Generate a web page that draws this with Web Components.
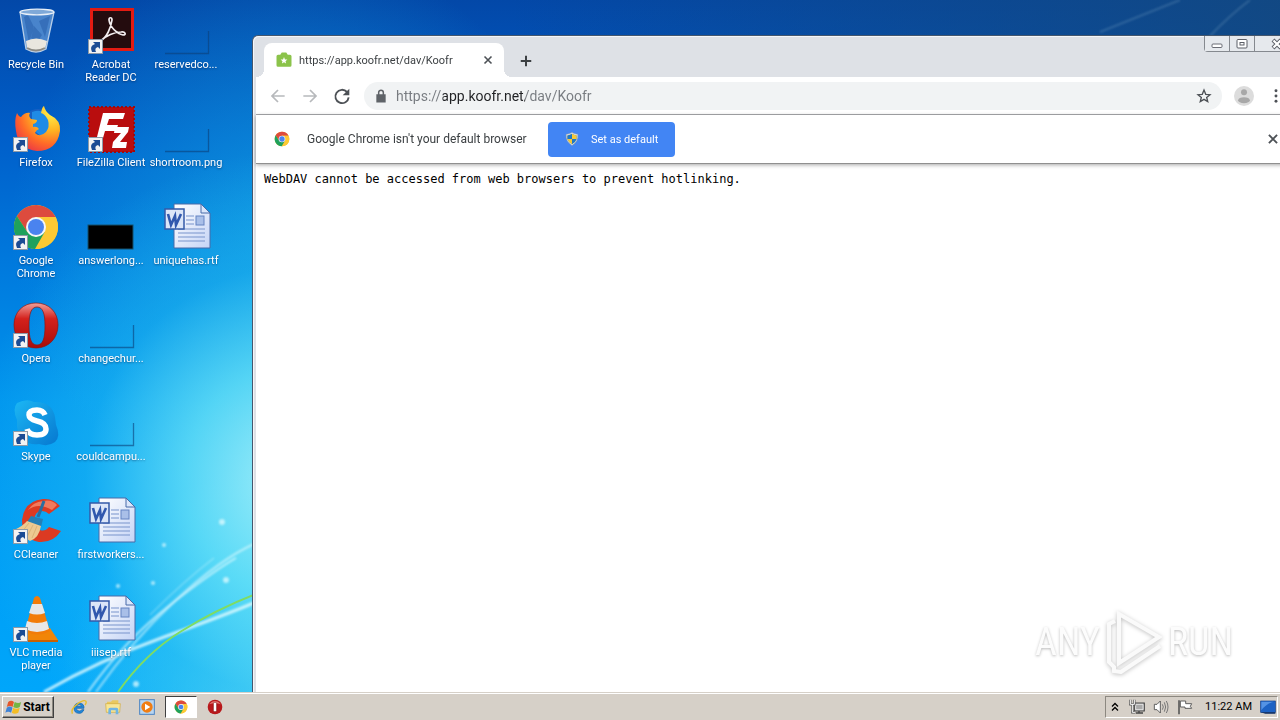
<!DOCTYPE html>
<html lang="en">
<head>
<meta charset="utf-8">
<title>Desktop</title>
<style>
html, body { margin: 0; height: 100%; }
body { font-family: Roboto, "Noto Sans", sans-serif; overflow: hidden; }
</style>
</head>
<body>
<desk-top></desk-top>
<script>
const chromeRing = `
  <circle cx="24" cy="24" r="22" fill="#fbc926"/>
  <path d="M24 14H43.6A22 22 0 0 0 4.9 13L15.3 29Z" fill="#dd4b3e"/>
  <path d="M43.6 14H24L32.7 29 23 46A22 22 0 0 0 43.6 14Z" fill="#fcc934"/>
  <path d="M4.9 13A22 22 0 0 0 23 46L32.7 29 24 34 15.3 29Z" fill="#1fa15d"/>
  <circle cx="24" cy="24" r="10" fill="#f4f6f8"/><circle cx="24" cy="24" r="8" fill="#4a83ef"/>`;
const operaRing = `
  <defs><linearGradient id="o" x1="0" y1="0" x2="0" y2="1"><stop offset="0" stop-color="#f0a09a"/><stop offset=".35" stop-color="#d4211c"/><stop offset="1" stop-color="#a80c0a"/></linearGradient></defs>
  <path fill-rule="evenodd" d="M24 2C37 2 46 11 46 24S37 47 24 47 2 37 2 24 11 2 24 2ZM25 6C19 6 17 13 17 25S19 44 25 44 33 37 33 25 31 6 25 6Z" fill="url(#o)" stroke="#8e1512" stroke-width=".7"/>`;
const GLYPHS = {
  bin: `<path d="M8 5 14 42Q24 48 34 42L42 5Z" fill="#6fa3dc" opacity=".65"/><path d="M8 5 14 42Q24 48 34 42L42 5" fill="none" stroke="#b9cfe8" stroke-width="1.3"/>
    <path d="M12 10 17 36 22 20 16 8ZM27 14 38 9 33 30ZM22 19 30 28 26 34 19 31Z" fill="#2b63ae" opacity=".6"/><path d="M14 34Q24 29 35 34L33 42Q24 47 15 42Z" fill="#e9e6df"/><path d="M15 41Q24 46 33 41" fill="none" stroke="#8c8a84" stroke-width="2"/>
    <ellipse cx="25" cy="5" rx="17" ry="2.8" fill="#7fa9d8" stroke="#e9f0f8" stroke-width="1.3"/>`,
  acrobat: `<rect x="3" y="1" width="44" height="43" fill="#e31b12"/><rect x="6" y="4" width="38" height="37" fill="#240c0e"/>
    <path d="M13 34C20 31 24 20 25 13 25 10 22 10 22 13 23 20 30 27 36 28 40 28 38 24 34 25 27 25 19 29 15 33 13 35 13 36 12 34" fill="none" stroke="#f4eef0" stroke-width="1.7"/>`,
  firefox: `<defs><radialGradient id="ff" cx=".8" cy=".15" r="1"><stop offset="0" stop-color="#fff04a"/><stop offset=".4" stop-color="#ffb321"/><stop offset=".7" stop-color="#ff6a28"/><stop offset="1" stop-color="#e8324a"/></radialGradient></defs>
    <circle cx="26" cy="20" r="16" fill="#1660c4"/><path d="M20 7Q31 3 37 12L38 24 30 32 20 24Z" fill="#1f8be6"/>
    <path d="M5 8Q7 12 9 12 13 7 18 8 16 11 19 14L25 15Q25 18 21 19L21 22Q25 21 27 24 24 25 23 28 28 33 34 27 38 22 36 15 33 9 29 8 30 2 32 1 33 6 38 10 49 15 48 26 45 46 25 46 6 44 4 26 2 15 5 8Z" fill="url(#ff)"/>`,
  filezilla: `<rect x="2" y="2" width="45" height="45" fill="#b90d0e" stroke="#a00a0c" stroke-width="2" stroke-dasharray="2 2"/><path d="M16 8H38L36 14H22L20 20H31L29 26H18L14 40H8ZM28 22H42L41 27 33 37H40L39 43H25L26 37 34 28H27Z" fill="#fff"/>`,
  chrome: chromeRing,
  opera: operaRing,
  skype: `<defs><linearGradient id="sk" x1="0" y1="0" x2="1" y2="1"><stop offset="0" stop-color="#1cb7f4"/><stop offset="1" stop-color="#0678d0"/></linearGradient></defs>
    <path d="M5 4Q15-1 22 3 40 2 43 18L44 26Q49 37 43 43 36 48 27 45 8 47 5 28L5 21Q0 10 5 4Z" fill="url(#sk)"/>
    <path d="M33 16Q31 11 25 11 17 11 17 16 17 20 25 22 34 24 34 30 34 36 25 36 17 36 15 30" fill="none" stroke="#fff" stroke-width="5.5"/>`,
  ccleaner: `<path d="M48 9Q41 1 31 2 12 4 10 23 10 42 27 45 41 46 49 34L37 30Q33 35 28 33 22 31 22 23 23 14 30 14 34 14 37 17Z" fill="#dc3a22"/><path d="M45 8Q40 2 31 4 21 5 16 13 26 5 40 13Z" fill="#f17a5d"/>
    <path d="M32 4 26 20" stroke="#2b6ea0" stroke-width="3"/><path d="M19 19 31 22 29 30 15 25Z" fill="#257fb5"/><path d="M15 24 29 29Q27 41 18 44L2 33Q11 29 15 24Z" fill="#edc991"/><path d="M17 26 9 36M21 28 15 40M25 29 20 41" stroke="#dcb478"/>`,
  vlc: `<path d="M10 33H38L46 45H5Z" fill="#f18507"/><path d="M5 45H46V47H5Z" fill="#c96002"/><path d="M22 3Q25-1 28 3L38 36Q26 43 13 36Z" fill="#f27c08"/><path d="M20 9H30L33 18Q25 21 17 18ZM15 26Q25 30 35 26L37 34Q25 40 13 34Z" fill="#e7e7e7"/>`,
  word: `<defs><linearGradient id="w" x1="0" y1="0" x2="1" y2="1"><stop offset="0" stop-color="#fff"/><stop offset="1" stop-color="#c5d4f6"/></linearGradient></defs>
    <path d="M12 1H39L48 10V45H12Z" fill="url(#w)" stroke="#496aa8"/><path d="M39 1V10H48Z" fill="#dbe6fa" stroke="#496aa8"/>
    <path d="M24 13H32M24 17H32M24 21H32M16 26H43M16 30H43M16 34H43M16 38H43" stroke="#7994cb" stroke-width="1.2"/><rect x="34" y="13" width="8" height="9" fill="#a9bfe8" stroke="#6583c2"/>
    <rect x="3" y="6" width="19" height="20" fill="#dce6f8" stroke="#345aa8" stroke-width="1.5"/><path d="M6 11 9 22 13 13 14 22 19 11" fill="none" stroke="#3158ae" stroke-width="2.6"/>`,
  black: `<rect x="1" y="22" width="45" height="24" fill="#000" stroke="#14506c"/>`,
  empty: `<path d="M3 46.500H46.500V24" fill="none" stroke="#0b3f78" stroke-opacity=".6" stroke-width="1.300"/>`,
  arrow: `<rect x="1.5" y=".5" width="14" height="14" fill="#f3f3f3" stroke="#8d9aa8"/><path d="M5 13Q2 7 8 5L6 3 13 3 13 10 11 8Q7 9 9 13Z" fill="#1c4c94"/>`,
  koofr: `<path d="M2 3H5L7 0H13L15 3H18Q20 3 20 5V17Q20 19 18 19H2Q0 19 0 17V5Q0 3 2 3Z" transform="translate(2 2)" fill="#8bc34a"/><path d="M12 8 13.300 11.200 16.500 11.400 14 13.500 14.800 16.800 12 15 9.200 16.800 10 13.500 7.500 11.400 10.700 11.200Z" fill="#fff"/>`,
  close: `<path d="M5 5 19 19M19 5 5 19" stroke="#4d5156" stroke-width="3.200" fill="none"/>`,
  plus: `<path d="M12 3V21M3 12H21" stroke="#3c4043" stroke-width="3.400" fill="none"/>`,
  back: `<path d="M22 12H3M12 3 3 12 12 21" stroke="#b7b9bc" stroke-width="2.600" fill="none"/>`,
  forward: `<path d="M2 12H21M12 3 21 12 12 21" stroke="#b7b9bc" stroke-width="2.600" fill="none"/>`,
  reload: `<path d="M19.500 6A10 10 0 1 0 22 14" stroke="#4d5156" stroke-width="2.800" fill="none"/><path d="M23 1V11H13Z" fill="#4d5156"/>`,
  lock: `<path d="M4 9H20V23H4Z" fill="#5f6368"/><path d="M8 11V6A4 4 0 0 1 16 6V11" stroke="#5f6368" stroke-width="2.600" fill="none"/>`,
  star: `<path d="M12 3 14.600 9.500 21 10 16 14.200 17.600 20.500 12 17.100 6.400 20.500 8 14.200 3 10 9.400 9.500Z" stroke="#4d5156" stroke-width="2" fill="none"/>`,
  person: `<circle cx="12" cy="12" r="12" fill="#dcdcdc"/><circle cx="12" cy="7.500" r="3.600" fill="#a8a8a8"/><ellipse cx="12" cy="17" rx="7" ry="3.600" fill="#a8a8a8"/>`,
  dots: `<circle cx="12" cy="4" r="2.200" fill="#4d5156"/><circle cx="12" cy="12" r="2.200" fill="#4d5156"/><circle cx="12" cy="20" r="2.200" fill="#4d5156"/>`,
  shield: `<path d="M12 1Q17 4 22 4 23 17 12 23 1 17 2 4 7 4 12 1Z" fill="#e9edf2" stroke="#8d99a8"/><path d="M12 3V12H4V6Q9 5 12 3ZM12 12H20Q18 18 12 21Z" fill="#f8c936"/><path d="M12 3V12H20V6Q15 5 12 3ZM12 12H4Q6 18 12 21Z" fill="#1f78c8"/><path d="M12 3V12H4V6Q9 5 12 3Z" fill="#1f78c8"/><path d="M12 3V12H20V6Q15 5 12 3ZM12 12H4Q6 18 12 21Z" fill="#f8c936"/><path d="M12 12H20Q18 18 12 21Z" fill="#1f78c8"/>`,
  minimise: `<rect x="2" y="12" width="20" height="7" rx="2" fill="#fff" stroke="#5b5e66" stroke-width="1.800"/>`,
  maximise: `<rect x="2" y="3" width="20" height="17" rx="2" fill="#fff" stroke="#5b5e66" stroke-width="2"/><rect x="8" y="9" width="8" height="5" fill="#fff" stroke="#5b5e66" stroke-width="2"/>`,
  quit: `<path d="M4 4 20 20M20 4 4 20" stroke="#5b5e66" stroke-width="8"/><path d="M5 5 19 19M19 5 5 19" stroke="#fff" stroke-width="4.500"/>`,
  windows: `<g transform="translate(-1 -1) scale(1.08)"><path d="M4 5Q8 2 12 5L10 12Q6 9 2 12Z" fill="#e4572b"/><path d="M13 5Q18 8 22 5L20 12Q16 15 11 12Z" fill="#74b543"/><path d="M2 13Q6 10 10 13L8 20Q4 17 0 20Z" fill="#3f83d6"/><path d="M11 13Q15 16 20 13L18 20Q13 23 9 20Z" fill="#f4bd25"/></g>`,
  ie: `<path d="M19.500 14H8Q8.500 18 12.500 18 15 18 16 16H19.500Q17 22 11.500 21.500 4.500 21 4.500 13.500 5 6 12.500 6 20 6.500 19.500 14ZM8.300 11.300H16Q15.500 8.800 12.300 8.800 9 8.800 8.300 11.300Z" fill="#2187d8" stroke="#0f5fae" stroke-width="1"/><path d="M2 22Q-1 15 9 8 18 1 22 3 24 5 21 9" fill="none" stroke="#e9bd2b" stroke-width="2"/>`,
  folder: `<path d="M3 4H9L11 2H20V18H3Z" fill="#e9c95f"/><path d="M1 7H23L22 20H2Z" fill="#f8e694" stroke="#d0a93b"/><path d="M5 23V16Q5 13 8 13H17Q20 13 20 16V23H16V17H9V23Z" fill="#70b5e3"/>`,
  player: `<rect x="1" y="1" width="22" height="22" fill="#b8d5f1" stroke="#4b83c3" stroke-width="1.500"/><circle cx="12" cy="12" r="8.500" fill="#f07d13"/><path d="M9 7 17 12 9 17Z" fill="#fff"/>`,
  operaSmall: `<circle cx="12" cy="12" r="11" fill="#b8181b"/><path d="M3 8Q12-2 21 8Q12 5 3 8Z" fill="#e67672"/><rect x="9.500" y="5" width="5" height="14" rx="2" fill="#fff" stroke="#851013"/>`,
  chevrons: `<path d="M6 11 12 5 18 11M6 19 12 13 18 19" stroke="#000" stroke-width="2.600" fill="none"/>`,
  network: `<rect x="8" y="6" width="15" height="12" fill="#aaa" stroke="#444" stroke-width="1.500"/><path d="M10 8H21V16H10Z" fill="none" stroke="#fff"/><path d="M10 21H21M15 18V21" stroke="#444" stroke-width="2"/><path d="M2 1V8H8V1M5 8V20H9" fill="none" stroke="#555" stroke-width="3.500"/><path d="M2 1V8H8V1M5 8V20H9" fill="none" stroke="#fff" stroke-width="1.500"/>`,
  speaker: `<path d="M2 8H6L11 3V21L6 16H2Z" fill="#fff" stroke="#555" stroke-width="1.400"/><path d="M14 8Q17 12 14 16M17 5Q21 12 17 19M20 3Q25 12 20 21" fill="none" stroke="#777" stroke-width="1.500"/>`,
  flag: `<path d="M3 2V23" stroke="#555" stroke-width="2.400"/><path d="M5 3H13V7H22L20 11 22 14H12V12H5Z" fill="#fff" stroke="#555" stroke-width="1.400"/>`,
  screen: `<rect x="1" y="3" width="22" height="17" fill="#1d62c4" stroke="#0c3a86"/><path d="M2 4H21Q9 7 2 17Z" fill="#5593e4"/><path d="M1 20H23V22H8Z" fill="#0b2b61"/>`
};

const LARGE = ["bin","acrobat","firefox","filezilla","chrome","opera","skype","ccleaner","vlc","word","black","empty"];

class GlyphIcon extends HTMLElement {
  connectedCallback() {
    const name = this.getAttribute("name");
    const size = name === "arrow" ? 16 : LARGE.includes(name) ? 48 : 24;
    this.attachShadow({ mode: "open" }).innerHTML = `
      <style>:host{display:block;flex:none;width:var(--size,16px);height:var(--size,16px)}svg{display:block;width:100%;height:100%;overflow:visible}</style>
      <svg viewBox="0 0 ${size} ${size}" aria-hidden="true">${GLYPHS[name]}</svg>`;
  }
}
customElements.define("glyph-icon", GlyphIcon);

class DeskIcon extends HTMLElement {
  connectedCallback() {
    this.attachShadow({ mode: "open" }).innerHTML = `
      <style>
        :host{display:block}
        button{display:flex;flex-direction:column;align-items:center;gap:3px;width:100%;height:100%;padding:7px 0 0;border:0;background:none;font:inherit;color:#fff}
        .pic{display:grid;align-items:end}
        .pic>*{grid-area:1/1}
        .pic glyph-icon{--size:48px}
        .pic glyph-icon[name=arrow]{--size:16px}
        .label{font-size:11px;line-height:13px;text-align:center;white-space:nowrap;text-shadow:0 1px 2px rgba(0,20,60,.5)}
      </style>
      <button type="button"><span class="pic"><glyph-icon name="${this.getAttribute("icon")}"></glyph-icon>${this.hasAttribute("shortcut") ? '<glyph-icon name="arrow"></glyph-icon>' : ""}</span>
      <span class="label"><slot></slot></span></button>`;
  }
}
customElements.define("desk-icon", DeskIcon);

class WallPaper extends HTMLElement {
  connectedCallback() {
    this.attachShadow({ mode: "open" }).innerHTML = `
      <style>
        :host{display:block;overflow:hidden;background:
          linear-gradient(to right,transparent 40%,rgba(20,72,125,.85) 100%),
          radial-gradient(circle 330px at 300px 480px,rgba(175,245,250,.95),rgba(110,232,248,.75) 35%,rgba(40,195,245,.4) 65%,transparent),
          radial-gradient(circle 240px at 300px 700px,rgba(110,220,240,.9),rgba(70,205,240,.5) 55%,transparent),
          radial-gradient(circle 280px at 290px 230px,rgba(20,170,230,.65),transparent),
          linear-gradient(to bottom,#0348a8 0,#005fca 20%,#0079dd 38%,#0095ee 58%,#00a6fb 100%)}
        svg{display:block}
      </style>
      <svg width="1280" height="692" fill="none" aria-hidden="true">
        <defs><filter id="b"><feGaussianBlur stdDeviation="1"/></filter></defs>
        <g stroke="#e6fcff" filter="url(#b)">
          <path d="M44 692Q100 660 164 637T256 602" stroke-width="3" opacity=".8"/>
          <path d="M88 692Q125 640 170 605T236 558" stroke-width="2" opacity=".7"/>
          <path d="M96 692Q132 641 176 600T256 543" stroke-width="2" opacity=".6"/>
          <path d="M150 615Q185 580 214 558" stroke-width="1" opacity=".6"/>
          <path d="M1210 36Q1230 15 1250 0M1100 32 1180 0" stroke-width="2" opacity=".15"/>
        </g>
        <path d="M118 692Q145 654 180 632T256 594" stroke="#7fdc62" stroke-width="2"/>
        <g fill="#e8fdff" opacity=".7" filter="url(#b)"><circle cx="222" cy="522" r="3"/><circle cx="226" cy="580" r="3"/><circle cx="153" cy="583" r="2"/><circle cx="118" cy="586" r="2"/><circle cx="136" cy="684" r="3"/><circle cx="164" cy="545" r="2"/></g>
      </svg>`;
  }
}
customElements.define("wall-paper", WallPaper);

class BrowserTab extends HTMLElement {
  connectedCallback() {
    this.attachShadow({ mode: "open" }).innerHTML = `
      <style>
        :host{display:flex;align-items:center;box-sizing:border-box;width:240px;height:34px;padding:0 8px 0 11px;background:#fff;border-radius:8px 8px 0 0;position:relative;font-size:11px;color:#3c4043}
        :host::before,:host::after{content:"";position:absolute;bottom:0;width:8px;height:8px}
        :host::before{right:100%;background:radial-gradient(circle at 0 0,transparent 8px,#fff 8px)}
        :host::after{left:100%;background:radial-gradient(circle at 100% 0,transparent 8px,#fff 8px)}
        span{flex:1;margin-left:6px;white-space:nowrap}
        button{padding:2px;border:0;background:none}
      </style>
      <glyph-icon name="koofr" style="--size:18px"></glyph-icon><span><slot></slot></span>
      <button type="button" aria-label="Close tab"><glyph-icon name="close" style="--size:12px"></glyph-icon></button>`;
  }
}
customElements.define("browser-tab", BrowserTab);

class BrowserBar extends HTMLElement {
  connectedCallback() {
    this.attachShadow({ mode: "open" }).innerHTML = `
      <style>
        :host{display:flex;align-items:center;height:37px;padding:0 16px 0 14px;background:#fff;border-bottom:1px solid #a9abae}
        button{display:block;padding:0;border:0;background:none}
        nav{display:flex;gap:16px;--size:16px}
        form{flex:1;display:flex;align-items:center;gap:8px;height:28px;margin:0 12px 0 14px;padding:0 10px;border-radius:14px;background:#f1f3f4}
        input{flex:1;min-width:0;height:20px;padding:0;border:0;outline:0;font:14px/20px var(--ui);
          color:transparent;-webkit-background-clip:text;background-clip:text;
          background-image:linear-gradient(to right,#777b80 47px,#202124 47px 129px,#777b80 129px)}
        .end{display:flex;align-items:center;gap:14px}
      </style>
      <nav aria-label="History"><button aria-label="Back"><glyph-icon name="back"></glyph-icon></button><button aria-label="Forward"><glyph-icon name="forward"></glyph-icon></button><button aria-label="Reload"><glyph-icon name="reload"></glyph-icon></button></nav>
      <form><glyph-icon name="lock" style="--size:14px"></glyph-icon><input aria-label="Address" value="https://app.koofr.net/dav/Koofr"><button type="button" aria-label="Bookmark"><glyph-icon name="star"></glyph-icon></button></form>
      <div class="end"><button aria-label="Profile"><glyph-icon name="person" style="--size:20px"></glyph-icon></button><button aria-label="Menu"><glyph-icon name="dots"></glyph-icon></button></div>`;
  }
}
customElements.define("browser-bar", BrowserBar);

class InfoBar extends HTMLElement {
  connectedCallback() {
    this.attachShadow({ mode: "open" }).innerHTML = `
      <style>
        :host{display:flex;align-items:center;height:48px;padding:0 20px 0 18px;background:#fff;border-bottom:1px solid #8f8f8f;box-shadow:0 1px 4px rgba(0,0,0,.35);color:#3c4043;font-size:12px;position:relative}
        p{margin:0 12px 0 17px;width:229px;white-space:nowrap}
        .act{display:flex;align-items:center;gap:12px;height:35px;padding:0 17px;width:127px;border:0;border-radius:4px;background:#4285f4;color:#fff;font:11px var(--ui);white-space:nowrap}
        .x{margin-left:auto;padding:0;border:0;background:none}
      </style>
      <glyph-icon name="chrome"></glyph-icon><p><slot></slot></p>
      <button class="act" type="button"><glyph-icon name="shield" style="--size:14px"></glyph-icon>Set as default</button>
      <button class="x" type="button" aria-label="Dismiss"><glyph-icon name="close" style="--size:14px"></glyph-icon></button>`;
  }
}
customElements.define("info-bar", InfoBar);

class BrowserWindow extends HTMLElement {
  connectedCallback() {
    this.attachShadow({ mode: "open" }).innerHTML = `
      <style>
        :host{display:flex;flex-direction:column;box-sizing:border-box;border:1px solid #45576d;border-bottom:0;border-radius:6px 0 0 0;background:#dee1e6;box-shadow:inset 1px 1px #f4f6f9;padding:0 3px;overflow:hidden}
        header{display:flex;align-items:flex-end;height:41px;padding-left:8px;position:relative}
        .new{align-self:center;margin:8px 0 0 15px;padding:0;border:0;background:none}
        .win{position:absolute;top:0;right:0;display:flex;border:1px solid #85898f;border-top:0;border-radius:0 0 4px 4px}
        .win button{display:grid;place-items:center;width:25px;height:15px;padding:0;border:0;border-right:1px solid #85898f;background:#e6e9ed;--size:12px}
        .win button:last-child{width:44px;border-right:0}
        main{flex:1;background:#fff;padding:6px 8px}
        pre{margin:0;font:12px/18px "DejaVu Sans Mono","Liberation Mono",monospace;color:#000}
      </style>
      <header><browser-tab>https://app.koofr.net/dav/Koofr</browser-tab><button class="new" aria-label="New tab"><glyph-icon name="plus" style="--size:14px"></glyph-icon></button>
        <div class="win"><button aria-label="Minimise"><glyph-icon name="minimise"></glyph-icon></button><button aria-label="Maximise"><glyph-icon name="maximise"></glyph-icon></button><button aria-label="Close"><glyph-icon name="quit"></glyph-icon></button></div></header>
      <browser-bar></browser-bar>
      <info-bar>Google Chrome isn't your default browser</info-bar>
      <main><pre>WebDAV cannot be accessed from web browsers to prevent hotlinking.</pre></main>`;
  }
}
customElements.define("browser-window", BrowserWindow);

class TaskBar extends HTMLElement {
  connectedCallback() {
    this.attachShadow({ mode: "open" }).innerHTML = `
      <style>
        :host{display:flex;align-items:center;box-sizing:border-box;height:28px;padding:0 2px;background:#d6d0c8;border-top:1px solid #d6d0c8;box-shadow:inset 0 1px #fff;color:#000}
        button{display:grid;place-items:center;box-sizing:border-box;padding:0;border:0;background:none}
        .start{display:flex;justify-content:center;gap:1px;width:52px;height:22px;background:#d6d0c8;border:1px solid;border-color:#fff #404040 #404040 #fff;box-shadow:inset -1px -1px #8c8880;font:bold 12px var(--ui)}
        nav{display:flex;gap:2px;margin-left:9px}
        nav button{width:32px;height:22px}
        nav .on{background:#fff;border:1px solid;border-color:#404040 #fff #fff #404040}
        .tray{display:flex;align-items:center;gap:8px;box-sizing:border-box;height:22px;margin-left:auto;padding:0 1px 0 3px;border:1px solid;border-color:#8c8880 #fff #fff #8c8880}
        time{font-size:11px;margin-left:4px;white-space:nowrap}
      </style>
      <button class="start"><glyph-icon name="windows"></glyph-icon>Start</button>
      <nav aria-label="Quick launch">
        <button aria-label="Internet Explorer"><glyph-icon name="ie"></glyph-icon></button>
        <button aria-label="Explorer"><glyph-icon name="folder"></glyph-icon></button>
        <button aria-label="Media Player"><glyph-icon name="player"></glyph-icon></button>
        <button class="on" aria-label="Google Chrome"><glyph-icon name="chrome" style="--size:14px"></glyph-icon></button>
        <button aria-label="Opera"><glyph-icon name="operaSmall"></glyph-icon></button>
      </nav>
      <div class="tray"><glyph-icon name="chevrons" style="--size:12px"></glyph-icon><glyph-icon name="network"></glyph-icon><glyph-icon name="speaker"></glyph-icon><glyph-icon name="flag"></glyph-icon><time datetime="11:22">11:22 AM</time><glyph-icon name="screen"></glyph-icon></div>`;
  }
}
customElements.define("task-bar", TaskBar);

class RunMark extends HTMLElement {
  connectedCallback() {
    this.attachShadow({ mode: "open" }).innerHTML = `
      <style>
        :host{display:flex;align-items:center;gap:6px;font:38px/64px "Liberation Sans Narrow","Roboto Condensed",Roboto,sans-serif;color:#fcfcfc;text-shadow:0 1px 3px rgba(0,0,0,.28)}
        svg{display:block;filter:drop-shadow(0 1px 2px rgba(0,0,0,.25))}
      </style>
      <span>ANY</span>
      <svg width="56" height="64" viewBox="0 0 56 64" fill="none" stroke="#fafafa" stroke-width="4" aria-hidden="true"><path d="M13 4 53 27 13 53ZM9 11 3 14V52L8 57V61L15 62 54 36"/></svg>
      <span>RUN</span>`;
  }
}
customElements.define("run-mark", RunMark);

class DeskTop extends HTMLElement {
  connectedCallback() {
    this.attachShadow({ mode: "open" }).innerHTML = `
      <style>
        :host{--ui:Roboto,"Noto Sans",sans-serif;display:flex;flex-direction:column;height:100vh;font-family:var(--ui)}
        .area{flex:1;min-height:0;position:relative;overflow:hidden}
        wall-paper{position:absolute;inset:0}
        .icons{position:relative;display:grid;grid-auto-flow:column;grid-template-rows:repeat(7,98px);grid-auto-columns:72px;column-gap:3px}
        browser-window{position:absolute;left:252px;top:35px;right:-24px;bottom:0}
        run-mark{position:absolute;right:47px;bottom:18px}
      </style>
      <div class="area">
        <wall-paper></wall-paper>
        <div class="icons">
          <desk-icon icon="bin">Recycle Bin</desk-icon>
          <desk-icon icon="firefox" shortcut>Firefox</desk-icon>
          <desk-icon icon="chrome" shortcut>Google<br>Chrome</desk-icon>
          <desk-icon icon="opera" shortcut>Opera</desk-icon>
          <desk-icon icon="skype" shortcut>Skype</desk-icon>
          <desk-icon icon="ccleaner" shortcut>CCleaner</desk-icon>
          <desk-icon icon="vlc" shortcut>VLC media<br>player</desk-icon>
          <desk-icon icon="acrobat" shortcut>Acrobat<br>Reader DC</desk-icon>
          <desk-icon icon="filezilla" shortcut>FileZilla Client</desk-icon>
          <desk-icon icon="black">answerlong...</desk-icon>
          <desk-icon icon="empty">changechur...</desk-icon>
          <desk-icon icon="empty">couldcampu...</desk-icon>
          <desk-icon icon="word">firstworkers...</desk-icon>
          <desk-icon icon="word">iiisep.rtf</desk-icon>
          <desk-icon icon="empty">reservedco...</desk-icon>
          <desk-icon icon="empty">shortroom.png</desk-icon>
          <desk-icon icon="word">uniquehas.rtf</desk-icon>
        </div>
        <browser-window></browser-window>
        <run-mark aria-label="ANY RUN"></run-mark>
      </div>
      <task-bar></task-bar>`;
  }
}
customElements.define("desk-top", DeskTop);
</script>
</body>
</html>
